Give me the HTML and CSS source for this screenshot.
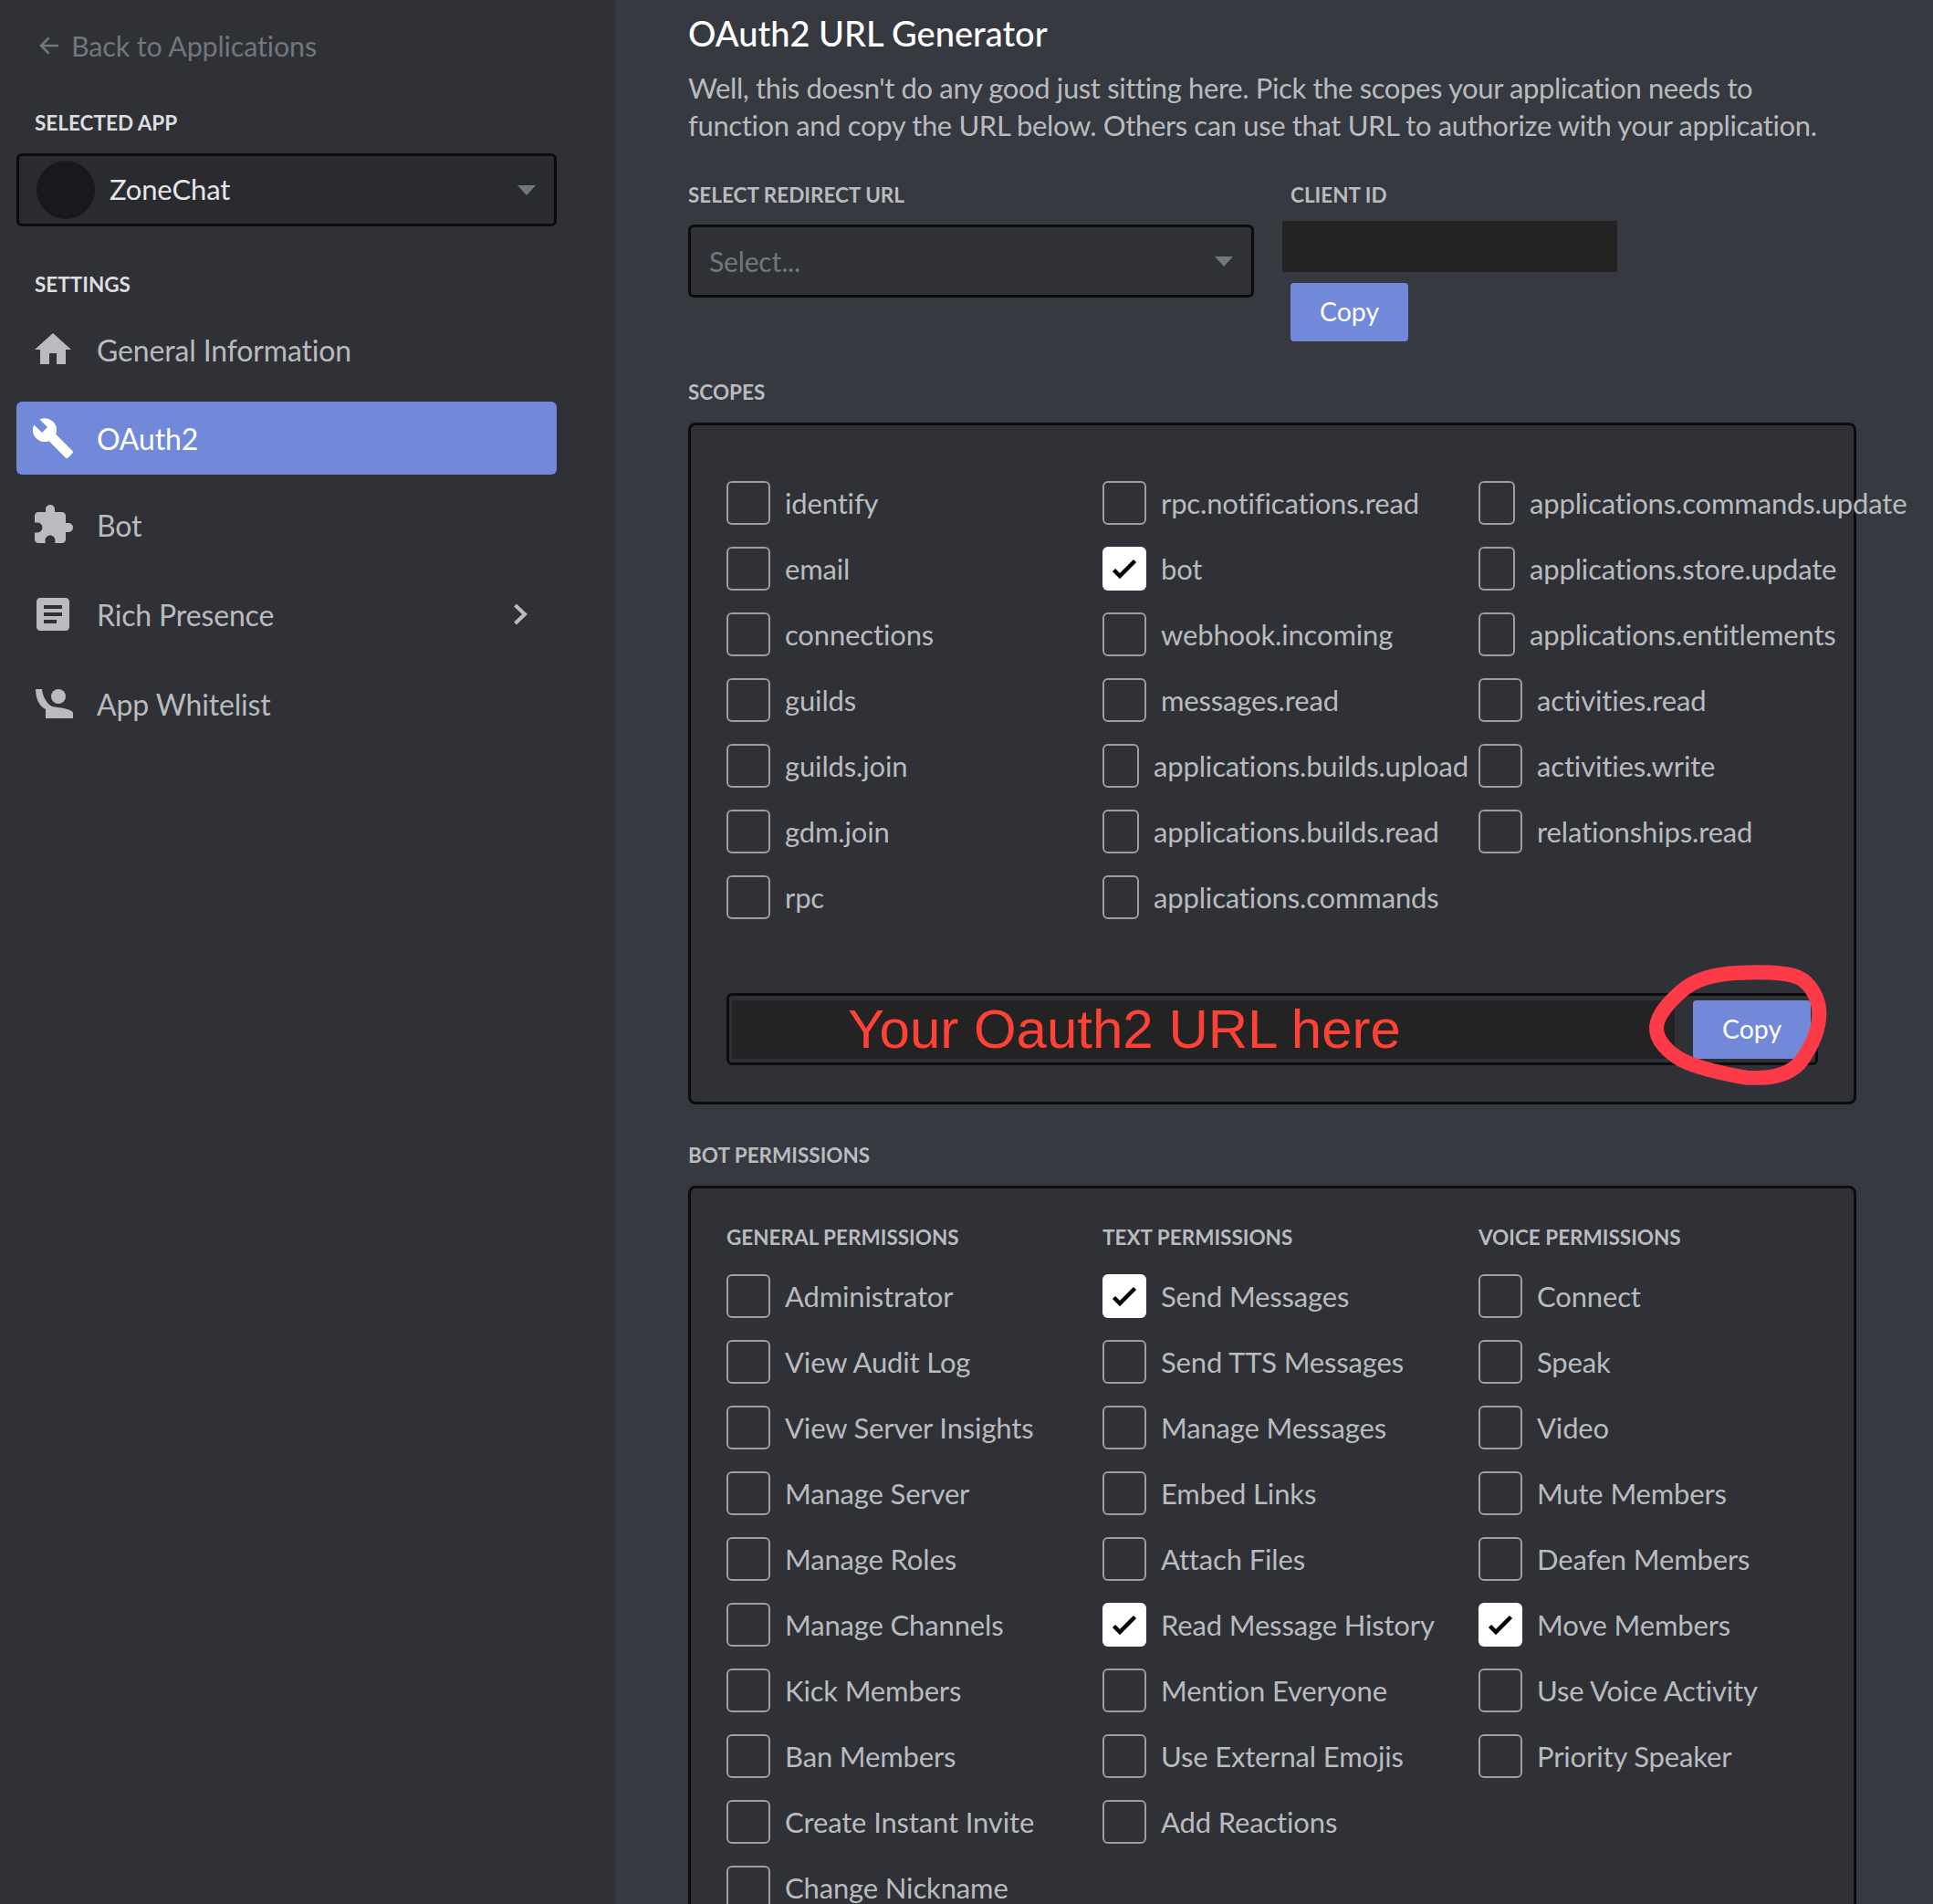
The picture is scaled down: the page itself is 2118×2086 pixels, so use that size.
FILE: index.html
```html
<!DOCTYPE html>
<html lang="en">
<head>
    <meta charset="UTF-8">
    <title>OAuth2 URL Generator</title>
    <link rel="stylesheet" href="styles.css">
</head>
<body>
    <div class="app">
        <aside class="sidebar">
            <a class="back">
                <svg class="back-arrow" viewBox="0 0 22 20"><path d="M21 10H2M10.500 1.500 2 10l8.500 8.500"/></svg>
                Back to Applications
            </a>
            <div class="side-heading side-heading-app">SELECTED APP</div>
            <div class="app-select">
                <span class="avatar"></span>
                <span class="app-name">ZoneChat</span>
                <span class="caret"></span>
            </div>
            <div class="side-heading side-heading-settings">SETTINGS</div>
            <nav class="nav">
                <a class="nav-item">
                    <svg class="nav-icon" viewBox="0 0 24 24"><path d="M10 20v-6h4v6h5v-8h3L12 3 2 12h3v8z"/></svg>
                    General Information
                </a>
                <a class="nav-item active">
                    <svg class="nav-icon" viewBox="0 0 24 24"><path d="M22.700 19l-9.100-9.100c.9-2.300.4-5-1.500-6.900-2-2-5-2.400-7.400-1.300L9 6 6 9 1.600 4.700C.4 7.100.9 10.100 2.900 12.100c1.900 1.900 4.600 2.400 6.900 1.500l9.100 9.100c.4.4 1 .4 1.400 0l2.300-2.300c.5-.4.5-1.100.1-1.400z"/></svg>
                    OAuth2
                </a>
                <a class="nav-item">
                    <svg class="nav-icon" viewBox="0 0 24 24"><path d="M20.500 11H19V7c0-1.100-.9-2-2-2h-4V3.500C13 2.120 11.880 1 10.500 1S8 2.120 8 3.500V5H4c-1.100 0-1.990.9-1.990 2v3.800H3.500c1.490 0 2.700 1.210 2.700 2.700s-1.210 2.700-2.700 2.700H2V20c0 1.100.9 2 2 2h3.800v-1.500c0-1.490 1.210-2.700 2.700-2.700 1.490 0 2.700 1.210 2.700 2.700V22H17c1.100 0 2-.9 2-2v-4h1.500c1.380 0 2.500-1.120 2.500-2.500S21.880 11 20.500 11z"/></svg>
                    Bot
                </a>
                <a class="nav-item">
                    <svg class="nav-icon" viewBox="0 0 24 24"><path d="M19 3H5c-1.100 0-2 .9-2 2v14c0 1.100.9 2 2 2h14c1.100 0 2-.9 2-2V5c0-1.100-.9-2-2-2zm-5 14H7v-2h7v2zm3-4H7v-2h10v2zm0-4H7V7h10v2z"/></svg>
                    Rich Presence
                    <svg class="chevron" viewBox="0 0 16 24"><path d="M2.500 2 13 12 2.500 22"/></svg>
                </a>
                <a class="nav-item">
                    <svg class="nav-icon" viewBox="0 0 48 48"><circle cx="30" cy="16" r="8"/><path d="M5 8h7c.5 7 5 16 11 19 4 1 9 1 13 2 5 1 10 3 10 5v6H16V30C9 27 5 18 5 8z"/></svg>
                    App Whitelist
                </a>
            </nav>
        </aside>

        <main class="content">
            <h1 class="title">OAuth2 URL Generator</h1>
            <p class="desc">Well, this doesn't do any good just sitting here. Pick the scopes your application needs to function and copy the URL below. Others can use that URL to authorize with your application.</p>

            <div class="redirect-row">
                <div class="redirect-col">
                    <div class="label">SELECT REDIRECT URL</div>
                    <div class="select">
                        <span class="placeholder">Select...</span>
                        <span class="caret"></span>
                    </div>
                </div>
                <div class="client-col">
                    <div class="label">CLIENT ID</div>
                    <div class="client-id"></div>
                    <button class="btn">Copy</button>
                </div>
            </div>

            <div class="label scopes-label">SCOPES</div>
            <section class="panel panel-scopes">
                <div class="grid">
                    <div class="col">
                        <label class="check"><span class="box"></span>identify</label>
                        <label class="check"><span class="box"></span>email</label>
                        <label class="check"><span class="box"></span>connections</label>
                        <label class="check"><span class="box"></span>guilds</label>
                        <label class="check"><span class="box"></span>guilds.join</label>
                        <label class="check"><span class="box"></span>gdm.join</label>
                        <label class="check"><span class="box"></span>rpc</label>
                    </div>
                    <div class="col">
                        <label class="check"><span class="box"></span>rpc.notifications.read</label>
                        <label class="check"><span class="box on"><svg viewBox="0 0 48 48"><path d="M12.500 25.500 19 32 35.500 15.500"/></svg></span>bot</label>
                        <label class="check"><span class="box"></span>webhook.incoming</label>
                        <label class="check"><span class="box"></span>messages.read</label>
                        <label class="check"><span class="box narrow"></span>applications.builds.upload</label>
                        <label class="check"><span class="box narrow"></span>applications.builds.read</label>
                        <label class="check"><span class="box narrow"></span>applications.commands</label>
                    </div>
                    <div class="col">
                        <label class="check"><span class="box narrow"></span>applications.commands.update</label>
                        <label class="check"><span class="box narrow"></span>applications.store.update</label>
                        <label class="check"><span class="box narrow"></span>applications.entitlements</label>
                        <label class="check"><span class="box"></span>activities.read</label>
                        <label class="check"><span class="box"></span>activities.write</label>
                        <label class="check"><span class="box"></span>relationships.read</label>
                    </div>
                </div>
                <div class="url-box">
                    <div class="url-value">Your Oauth2 URL here</div>
                    <button class="btn">Copy</button>
                </div>
                <svg class="scribble" viewBox="300 60 600 420"><path d="M345 285C350 240 390 200 430 165 470 130 540 110 620 107 700 104 770 105 810 122 850 140 880 190 880 240 880 290 860 345 815 405 770 450 710 455 640 452 570 440 480 420 430 395 385 370 342 330 345 285Z"/></svg>
            </section>

            <div class="label perms-label">BOT PERMISSIONS</div>
            <section class="panel panel-perms">
                <div class="grid">
                    <div class="col">
                        <div class="group-title">GENERAL PERMISSIONS</div>
                        <label class="check"><span class="box"></span>Administrator</label>
                        <label class="check"><span class="box"></span>View Audit Log</label>
                        <label class="check"><span class="box"></span>View Server Insights</label>
                        <label class="check"><span class="box"></span>Manage Server</label>
                        <label class="check"><span class="box"></span>Manage Roles</label>
                        <label class="check"><span class="box"></span>Manage Channels</label>
                        <label class="check"><span class="box"></span>Kick Members</label>
                        <label class="check"><span class="box"></span>Ban Members</label>
                        <label class="check"><span class="box"></span>Create Instant Invite</label>
                        <label class="check"><span class="box"></span>Change Nickname</label>
                    </div>
                    <div class="col">
                        <div class="group-title">TEXT PERMISSIONS</div>
                        <label class="check"><span class="box on"><svg viewBox="0 0 48 48"><path d="M12.500 25.500 19 32 35.500 15.500"/></svg></span>Send Messages</label>
                        <label class="check"><span class="box"></span>Send TTS Messages</label>
                        <label class="check"><span class="box"></span>Manage Messages</label>
                        <label class="check"><span class="box"></span>Embed Links</label>
                        <label class="check"><span class="box"></span>Attach Files</label>
                        <label class="check"><span class="box on"><svg viewBox="0 0 48 48"><path d="M12.500 25.500 19 32 35.500 15.500"/></svg></span>Read Message History</label>
                        <label class="check"><span class="box"></span>Mention Everyone</label>
                        <label class="check"><span class="box"></span>Use External Emojis</label>
                        <label class="check"><span class="box"></span>Add Reactions</label>
                    </div>
                    <div class="col">
                        <div class="group-title">VOICE PERMISSIONS</div>
                        <label class="check"><span class="box"></span>Connect</label>
                        <label class="check"><span class="box"></span>Speak</label>
                        <label class="check"><span class="box"></span>Video</label>
                        <label class="check"><span class="box"></span>Mute Members</label>
                        <label class="check"><span class="box"></span>Deafen Members</label>
                        <label class="check"><span class="box on"><svg viewBox="0 0 48 48"><path d="M12.500 25.500 19 32 35.500 15.500"/></svg></span>Move Members</label>
                        <label class="check"><span class="box"></span>Use Voice Activity</label>
                        <label class="check"><span class="box"></span>Priority Speaker</label>
                    </div>
                </div>
            </section>
        </main>
    </div>
</body>
</html>
```

FILE: styles.css
```css
html, body {
    margin: 0;
    padding: 0;
    height: 100%;
    overflow: hidden;
    background-color: #36393f;
}

body {
    font-family: Lato, "Open Sans", sans-serif;
    font-size: 31px;
    letter-spacing: -0.15px;
    color: #b9bbbe;
}

.app {
    display: flex;
    height: 2086px;
    overflow: hidden;
}

/* sidebar */
.sidebar {
    flex: 0 0 674px;
    box-sizing: border-box;
    padding: 29px 64px 0 18px;
    background-color: #2f3136;
}

.back {
    display: flex;
    align-items: center;
    gap: 13px;
    height: 42px;
    padding-left: 25px;
    font-size: 30.500px;
    color: #72767d;
}

.back-arrow {
    width: 22px;
    height: 20px;
    fill: none;
    stroke: #72767d;
    stroke-width: 2.500;
}

.side-heading {
    padding-left: 20px;
    font-size: 22.500px;
    font-weight: 700;
    line-height: 30px;
    letter-spacing: 0;
    color: #dcddde;
}

.side-heading-app {
    margin-top: 49px;
}

.side-heading-settings {
    margin-top: 49px;
}

.app-select {
    display: flex;
    align-items: center;
    box-sizing: border-box;
    height: 80px;
    margin-top: 18px;
    padding: 0 20px 0 19px;
    background-color: #2a2b2f;
    border: 3px solid #0c0c0e;
    border-radius: 6px;
}

.avatar {
    width: 64px;
    height: 64px;
    border-radius: 50%;
    background-color: #18191c;
}

.app-name {
    flex: 1;
    margin-left: 16px;
    padding-bottom: 3px;
    color: #e6e6e8;
}

.caret {
    width: 0;
    height: 0;
    border-left: 10px solid transparent;
    border-right: 10px solid transparent;
    border-top: 11px solid #72767d;
}

.nav {
    margin-top: 16px;
}

.nav-item {
    display: flex;
    align-items: center;
    height: 80px;
    margin-bottom: 18px;
    padding: 0 32px 0 16px;
    font-size: 32px;
    border-radius: 6px;
}

.nav-item:first-child {
    margin-bottom: 17px;
}

.nav-icon {
    flex: none;
    width: 48px;
    height: 48px;
    margin-right: 24px;
    fill: #b9bbbe;
}

.nav-item.active {
    margin-bottom: 15px;
    background-color: #7289da;
    color: #fff;
}

.active .nav-icon {
    fill: #fff;
}

.chevron {
    width: 16px;
    height: 24px;
    margin-left: auto;
    fill: none;
    stroke: #b9bbbe;
    stroke-width: 4;
}

/* main column */
.content {
    flex: 0 0 1280px;
    padding: 0 0 0 80px;
}

.title {
    margin: 14px 0 0;
    font-size: 38px;
    font-weight: 500;
    line-height: 44px;
    letter-spacing: 0;
    color: #fff;
}

.desc {
    max-width: 1250px;
    margin: 18px 0 0;
    line-height: 41px;
    letter-spacing: -0.370px;
}

.label {
    font-size: 22.500px;
    font-weight: 700;
    line-height: 30px;
    letter-spacing: 0;
}

.redirect-row {
    display: flex;
    margin-top: 41px;
}

.redirect-col {
    width: 620px;
}

.select {
    display: flex;
    align-items: center;
    justify-content: space-between;
    box-sizing: border-box;
    height: 80px;
    margin-top: 17px;
    padding: 0 20px;
    background-color: #2f3136;
    border: 3px solid #0c0c0e;
    border-radius: 6px;
}

.placeholder {
    font-size: 30px;
    color: #72767d;
}

.client-col {
    margin-left: 30px;
    padding-left: 10px;
}

.client-id {
    width: 367px;
    height: 56px;
    margin: 13px 0 12px -9px;
    background-color: #232323;
}

.btn {
    display: block;
    flex: none;
    width: 129px;
    height: 64px;
    padding: 0 0 2px;
    font: inherit;
    font-size: 28.500px;
    color: #fff;
    background-color: #7289da;
    border: none;
    border-radius: 4px;
}

.scopes-label {
    margin-top: 41px;
}

.perms-label {
    margin-top: 41px;
}

.panel {
    position: relative;
    box-sizing: border-box;
    width: 1280px;
    padding: 0 39px;
    background-color: #2f3136;
    border: 3px solid #0c0c0e;
    border-radius: 8px;
}

.panel-scopes {
    height: 747px;
    margin-top: 18px;
    padding-top: 49px;
}

.panel-perms {
    margin-top: 18px;
    padding-top: 39px;
}

.grid {
    display: flex;
}

.col {
    flex: 0 0 412px;
    min-width: 0;
}

.group-title {
    height: 30px;
    margin-bottom: 13px;
    font-size: 22.500px;
    font-weight: 700;
    line-height: 30px;
    letter-spacing: 0;
}

.check {
    display: flex;
    align-items: center;
    gap: 16px;
    height: 72px;
    white-space: nowrap;
}

.box {
    flex: none;
    box-sizing: border-box;
    display: flex;
    width: 48px;
    height: 48px;
    background-color: transparent;
    border: 2px solid #9c9ea2;
    border-radius: 6px;
}

.box.narrow {
    width: 40px;
}

.box.on {
    background-color: #fff;
    border: none;
}

.box svg {
    width: 100%;
    height: 100%;
    fill: none;
    stroke: #000;
    stroke-width: 4.500;
}

.url-box {
    display: flex;
    align-items: center;
    box-sizing: border-box;
    width: 1196px;
    height: 79px;
    margin-top: 69px;
    padding: 0 5px 0 3px;
    border: 3px solid #0c0c0e;
    border-radius: 6px;
}

.url-value {
    flex: 0 0 1033px;
    box-sizing: border-box;
    height: 64px;
    margin-right: 20px;
    padding-left: 127px;
    font-family: "Liberation Sans", Arial, sans-serif;
    font-size: 60px;
    line-height: 64px;
    letter-spacing: 0;
    color: #ff4136;
    background-color: #232323;
}

.scribble {
    position: absolute;
    left: 1043px;
    top: 584px;
    width: 200px;
    height: 140px;
    overflow: visible;
    fill: none;
    stroke: #fc3a48;
    stroke-width: 48;
}
```
